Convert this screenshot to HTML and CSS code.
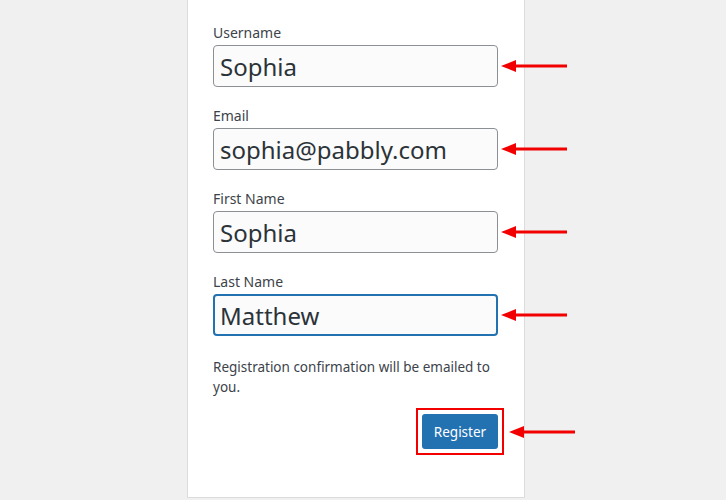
FILE: index.html
```html
<!doctype html>
<html lang="en">
  <head>
    <meta charset="UTF-8" />
    <meta name="viewport" content="width=device-width, initial-scale=1.0" />
    <title>Register</title>
    <link rel="stylesheet" href="styles.css">
  </head>
  <body>
    <div class="card">
      <form class="register-form">
        <div class="field">
          <label for="user_login">Username</label>
          <div class="input-row">
            <input type="text" id="user_login" class="input" value="Sophia" />
            <svg class="arrow" width="66" height="14" viewBox="0 0 66 14">
              <polygon points="0,7 15,1 15,13" fill="#f20000" />
              <rect x="13" y="5.5" width="53" height="3" fill="#f20000" />
            </svg>
          </div>
        </div>

        <div class="field">
          <label for="user_email">Email</label>
          <div class="input-row">
            <input type="text" id="user_email" class="input" value="sophia@pabbly.com" />
            <svg class="arrow" width="66" height="14" viewBox="0 0 66 14">
              <polygon points="0,7 15,1 15,13" fill="#f20000" />
              <rect x="13" y="5.5" width="53" height="3" fill="#f20000" />
            </svg>
          </div>
        </div>

        <div class="field">
          <label for="first_name">First Name</label>
          <div class="input-row">
            <input type="text" id="first_name" class="input" value="Sophia" />
            <svg class="arrow" width="66" height="14" viewBox="0 0 66 14">
              <polygon points="0,7 15,1 15,13" fill="#f20000" />
              <rect x="13" y="5.5" width="53" height="3" fill="#f20000" />
            </svg>
          </div>
        </div>

        <div class="field">
          <label for="last_name">Last Name</label>
          <div class="input-row">
            <input type="text" id="last_name" class="input focused" value="Matthew" />
            <svg class="arrow" width="66" height="14" viewBox="0 0 66 14">
              <polygon points="0,7 15,1 15,13" fill="#f20000" />
              <rect x="13" y="5.5" width="53" height="3" fill="#f20000" />
            </svg>
          </div>
        </div>

        <p class="message">Registration confirmation will be emailed to you.</p>

        <div class="submit">
          <div class="highlight">
            <button type="button" class="button">Register</button>
            <svg class="arrow arrow-button" width="66" height="14" viewBox="0 0 66 14">
              <polygon points="0,7 15,1 15,13" fill="#f20000" />
              <rect x="13" y="5.5" width="53" height="3" fill="#f20000" />
            </svg>
          </div>
        </div>
      </form>
    </div>
  </body>
</html>
```

FILE: styles.css
```css
* {
  margin: 0;
  padding: 0;
  box-sizing: border-box;
}

html,
body {
  height: 100%;
  background-color: #f0f0f1;
  font-family: "Noto Sans", "Open Sans", sans-serif;
  color: #3c434a;
  overflow: hidden;
}

.card {
  width: 338px;
  height: 498px;
  margin-left: 187px;
  background-color: #fff;
  border: 1px solid #dcdcde;
  border-top: none;
  padding: 22px 25px 0;
}

.field {
  margin-bottom: 18px;
}

.field label {
  display: block;
  font-size: 14px;
  line-height: 21px;
  margin-bottom: 2px;
}

.input-row {
  position: relative;
}

.input {
  display: block;
  width: 285px;
  height: 42px;
  padding: 0 6px;
  font-family: "Noto Sans", "Open Sans", sans-serif;
  font-size: 24px;
  color: #2c3338;
  background-color: #fbfbfc;
  border: 1px solid #8c8f94;
  border-radius: 4px;
  outline: none;
}

.input.focused {
  border: 2px solid #2271b1;
  padding: 0 5px;
}

.arrow {
  position: absolute;
  left: 288px;
  top: 14px;
}

.message {
  margin-top: 21px;
  font-size: 13.5px;
  line-height: 20px;
  width: 285px;
}

.submit {
  display: flex;
  justify-content: flex-end;
  width: 291px;
  margin-top: 11px;
}

.highlight {
  position: relative;
  border: 2px solid #f20000;
  padding: 4px;
}

.button {
  display: block;
  width: 76px;
  height: 35px;
  background-color: #2271b1;
  border: none;
  border-radius: 3px;
  color: #fff;
  font-family: "Noto Sans", "Open Sans", sans-serif;
  font-size: 13.5px;
}

.arrow-button {
  left: 91px;
  top: 15px;
}
```
